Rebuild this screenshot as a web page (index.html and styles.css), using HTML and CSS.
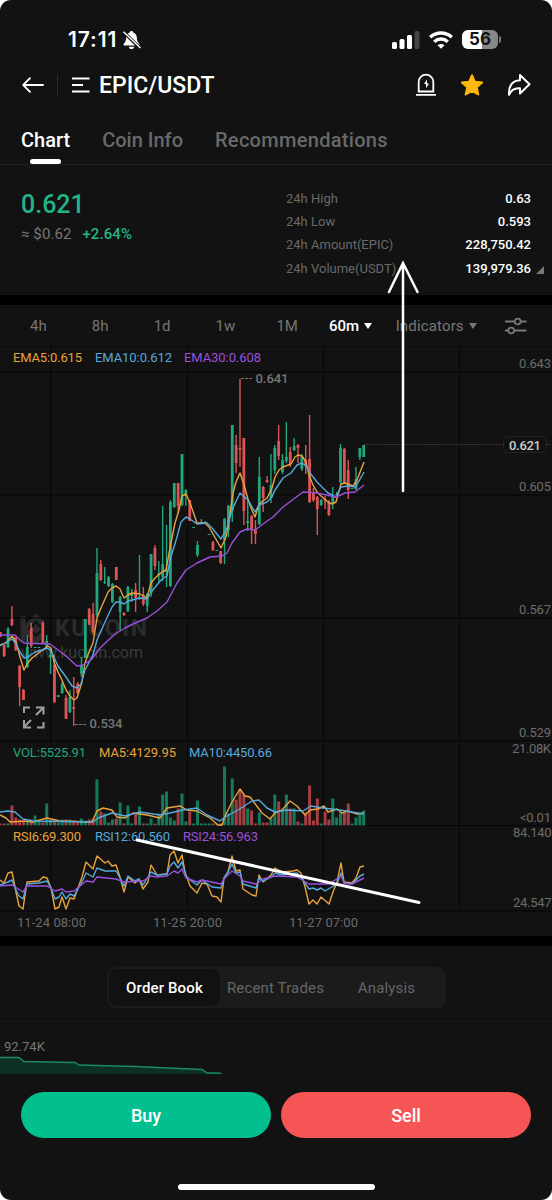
FILE: index.html
```
<!DOCTYPE html>
<html lang="en">
<head>
  <meta charset="UTF-8" />
  <meta name="viewport" content="width=device-width, initial-scale=1.0"/>
  <title>EPIC/USDT</title>
  <link rel="stylesheet" href="styles.css">
</head>
<body>
<div class="phone">

  <!-- Status bar -->
  <div class="status-bar">
    <span class="time">17:11</span>
    <svg class="mute" width="20" height="20" viewBox="0 0 20 20">
      <path d="M9.5 1c-1 0-1.6.7-1.7 1.5C5.400 3.300 4.300 5.200 4.200 7.500 4.100 11 3 12.500 1.700 14c-.5.7-.2 1.500.6 1.500h14.400c.8 0 1.100-.8.6-1.500-1.300-1.500-2.400-3-2.500-6.500-.1-2.300-1.200-4.200-3.600-5C11.100 1.700 10.500 1 9.500 1zM6.800 16.700h5.400c-.2 1.500-1.300 2.300-2.700 2.300s-2.500-.8-2.700-2.300z" fill="#fff"/>
      <path d="M1.500 2l16.500 16" stroke="#121212" stroke-width="3.200"/>
      <path d="M1.500 1.700l17 16.300" stroke="#fff" stroke-width="1.400"/>
    </svg>
    <svg class="signal" width="28" height="18" viewBox="0 0 28 18" fill="#fff">
      <rect x="0" y="11" width="5" height="7" rx="1.500"/>
      <rect x="7.500" y="8" width="5" height="10" rx="1.500"/>
      <rect x="15" y="4" width="5" height="14" rx="1.500"/>
      <rect x="22.500" y="0" width="5" height="18" rx="1.500" fill="#444"/>
    </svg>
    <svg class="wifi" width="24" height="18" viewBox="0 0 24 18" fill="none" stroke="#fff" stroke-width="3.400">
      <path d="M1.200 6.200C7.500.6 16.500.6 22.800 6.200"/>
      <path d="M5.200 10.700c4-3.600 9.600-3.600 13.600 0"/>
      <path d="M12 17.800l-3.500-3.500c2-1.800 5-1.800 7 0z" fill="#fff" stroke="none"/>
    </svg>
    <div class="battery">56</div>
    <div class="battery-cap"></div>
  </div>

  <!-- Pair header -->
  <div class="header">
    <svg width="22" height="16" viewBox="0 0 22 16" fill="none" stroke="#fff" stroke-width="1.800" stroke-linecap="round" stroke-linejoin="round">
      <path d="M21 8H1.200M8 1.200L1.200 8 8 14.800"/>
    </svg>
    <span class="divider"></span>
    <svg class="menu" width="18" height="16" viewBox="0 0 18 16" stroke="#fff" stroke-width="2">
      <path d="M0 1.500h17.500M0 8h11M0 14.500h17.500"/>
    </svg>
    <h1>EPIC/USDT</h1>
    <div class="actions">
      <svg width="22" height="24" viewBox="0 0 22 24" fill="none" stroke="#fff" stroke-width="1.800">
        <path d="M3.700 18.500V9a7.300 7.300 0 0 1 14.600 0v9.500zM1 21.800h20"/>
        <path d="M12 6.500L9 11h2v4.200l3-4.700h-2z" fill="#fff" stroke="none"/>
      </svg>
      <svg width="24" height="24" viewBox="0 0 24 24">
        <path d="M12 2.200l2.900 6.600 7.200.7-5.400 4.800 1.600 7.100L12 17.900l-6.300 3.500 1.600-7.100L1.900 9.500l7.200-.7z" fill="#ffb70f" stroke="#ffb70f" stroke-width="2" stroke-linejoin="round"/>
      </svg>
      <svg width="24" height="24" viewBox="0 0 24 24" fill="none" stroke="#fff" stroke-width="2" stroke-linejoin="round">
        <path d="M13 2l9.500 9.300L13 20.500v-5.200c-5-.6-8.600 1.200-11 6.500C1.500 13 5 7.600 13 7.200z"/>
      </svg>
    </div>
  </div>

  <div class="tabs">
    <span class="tab active">Chart</span>
    <span class="tab">Coin Info</span>
    <span class="tab long">Recommendations</span>
  </div>

  <!-- Price summary -->
  <div class="summary">
    <div class="price-box">
      <div class="price">0.621</div>
      <div class="sub">≈ $0.62 <span class="up">+2.64%</span></div>
    </div>
    <div class="stats">
      <div class="stat"><span>24h High</span><b>0.63</b></div>
      <div class="stat"><span>24h Low</span><b>0.593</b></div>
      <div class="stat"><span>24h Amount(EPIC)</span><b>228,750.42</b></div>
      <div class="stat"><span>24h Volume(USDT)</span><b>139,979.36</b></div>
      <i class="corner"></i>
    </div>
  </div>

  <!-- Timeframes -->
  <div class="frames">
    <span>4h</span>
    <span>8h</span>
    <span>1d</span>
    <span>1w</span>
    <span>1M</span>
    <span class="selected">60m<i class="caret"></i></span>
    <span class="indicators">Indicators<i class="caret"></i></span>
    <svg width="22" height="18" viewBox="0 0 22 18" fill="none" stroke="#777" stroke-width="1.800">
      <path d="M0 4.500h9.500M16 4.500h5.500M0 13.500h3M9.500 13.500h12"/>
      <circle cx="12.700" cy="4.500" r="2.900"/><circle cx="6.200" cy="13.500" r="2.900"/>
    </svg>
  </div>

  <!-- Candles, volume and RSI share one x axis -->
  <svg class="chart" width="552" height="589" viewBox="0 347 552 589">
    <g class="watermark">
      <path d="M23 616v26M24 629l12-12 7 7M24 629l12 12 7-7" class="wm-logo"/>
      <path d="M36 624l5 5-5 5-5-5z" fill="#2b2b2b"/>
      <text x="55" y="636" class="wm-name" textLength="92">KUCOIN</text>
      <text x="21" y="658" class="wm-url" textLength="122">www.kucoin.com</text>
    </g>
    <g id="grid"></g>
    <g id="volume"></g>
    <g id="candles"></g>
    <g id="lines"></g>
    <path d="M364 444.500H503M547 444.500h5" class="last-line"/>
    <rect x="503.500" y="436.500" width="43" height="16" rx="4" class="last-box"/>
    <text x="525" y="449.500" class="last-text" textLength="32">0.621</text>
    <path d="M241 378.500h12M75 724.500h12" class="leader"/>
    <text x="255.500" y="382.500" class="mark" textLength="33">0.641</text>
    <text x="89.500" y="728" class="mark" textLength="33">0.534</text>
    <g id="labels"></g>
    <g class="expand">
      <path d="M24 713v-5.500h6M36 707.500h7.500v7M24 720v7.500h7M37 727.500h6.500V722M36 715l7-7M31 720l-7 7"/>
    </g>
  </svg>

  <!-- Order book -->
  <div class="book">
    <div class="segments">
      <span class="segment on">Order Book</span>
      <span class="segment">Recent Trades</span>
      <span class="segment">Analysis</span>
    </div>
  </div>
  <div class="depth">
    <span>92.74K</span>
    <svg width="223" height="18" viewBox="0 0 223 18">
      <path d="M0 1.500h19l5 4 51 1 4 2.500 56 1.500 67 3 5 3.500h12l3 1H0z" fill="#0d3026"/>
      <path d="M0 1.500h19l5 4 51 1 4 2.500 56 1.500 67 3 5 3.500h12l3 1" fill="none" stroke="#1a8a67" stroke-width="1.300"/>
    </svg>
  </div>

  <div class="buttons">
    <button class="buy">Buy</button>
    <button class="sell">Sell</button>
  </div>
  <div class="home-bar"></div>

  <!-- Hand drawn marks over the screen -->
  <svg class="drawing" width="552" height="1200" viewBox="0 0 552 1200">
    <path d="M403 491V263M389 292l14-29 14.500 29" stroke-width="2.500"/>
    <path d="M137 840L419 902.500" stroke-width="3"/>
  </svg>
</div>

<script>
  const NS = 'http://www.w3.org/2000/svg';
  const GREEN = '#21a67d', RED = '#dd5455';
  const ORANGE = '#e9a33b', BLUE = '#55a9dc', PURPLE = '#9950dd';
  const STEP = 3.866;

  function add(parent, tag, attrs, text) {
    const el = document.createElementNS(NS, tag);
    for (const key in attrs) el.setAttribute(key, attrs[key]);
    if (text) el.textContent = text;
    document.getElementById(parent).appendChild(el);
  }

  // up/down, high, low, body top, body bottom
  const candles = [
    ['d',632,637,632,637], ['d',645,657,645,656], ['u',627,648,629,647], ['d',606,626,619,625], ['d',637,651,637,650],
    ['d',665,706,666,687], ['d',689,700,690,700], ['u',635,668,647,667], ['d',623,648,628,646], ['u',647,648,647,648],
    ['u',647,648,647,648], ['d',621,644,623,643], ['u',635,648,641,647], ['u',648,674,655,657], ['d',655,703,665,702],
    ['u',695,697,695,697], ['u',682,694,684,693], ['d',695,719,698,719], ['u',690,713,697,712], ['d',677,726,707,709],
    ['d',682,694,684,693], ['u',657,677,665,674], ['u',619,658,619,658], ['d',608,625,609,625], ['d',603,634,614,632],
    ['u',548,617,573,615], ['d',560,581,564,580], ['u',567,584,582,583], ['u',576,587,577,586], ['u',583,603,584,602],
    ['d',567,580,567,580], ['u',596,630,597,612], ['d',612,616,613,615], ['u',586,612,587,611], ['u',589,602,594,596],
    ['d',583,612,590,598], ['u',555,600,597,599], ['d',587,606,595,604], ['u',593,612,594,606], ['u',554,597,554,593],
    ['d',545,570,548,566], ['u',561,582,573,575], ['u',506,581,564,577], ['u',525,587,570,572], ['u',500,587,502,586],
    ['u',483,508,483,507], ['d',483,513,483,506], ['u',454,506,454,505], ['u',489,506,490,496], ['d',500,521,500,521],
    ['u',527,528,527,528], ['u',541,557,545,555], ['u',519,523,522,523], ['u',521,523,522,523], ['u',534,535,534,535],
    ['d',541,551,542,550], ['u',550,551,550,551], ['d',551,564,551,563], ['u',518,564,519,540], ['u',505,537,506,530],
    ['u',425,522,425,511], ['d',435,473,445,463], ['d',379,467,448,450], ['d',438,525,438,511], ['u',500,531,521,523],
    ['d',515,544,516,529], ['d',520,544,529,534], ['u',457,525,477,524], ['d',486,512,487,498], ['d',476,483,480,482],
    ['u',454,503,485,498], ['u',445,474,448,470], ['d',425,460,441,456], ['u',454,474,460,472], ['u',422,463,457,461],
    ['d',447,467,452,464], ['u',438,451,446,450], ['d',444,463,445,448], ['u',454,471,457,469], ['d',445,474,460,466],
    ['d',415,503,459,502], ['d',488,502,493,500], ['d',496,535,497,509], ['u',499,506,500,505], ['d',496,509,499,501],
    ['d',500,516,503,515], ['u',487,509,497,503], ['u',492,496,494,495], ['u',444,484,448,482], ['d',448,484,449,483],
    ['d',460,499,470,490], ['u',488,489,488,489], ['u',467,490,479,489], ['u',448,460,448,457], ['u',445,457,445,457]
  ];

  const volumes = [
    2,2,2,20,8,6,4,4,6,10,5,3,22,6,5,3,6,6,6,5,3,7,5,6,7,46,14,12,3,6,7,23,2,20,2,12,19,2,2,7,
    2,12,31,34,8,5,17,32,4,14,2,25,2,2,2,2,2,2,59,12,47,26,36,31,17,15,2,13,3,3,7,31,24,16,31,17,17,4,2,13,
    40,5,27,2,14,6,27,8,13,13,22,2,8,12,15
  ];

  // price averages
  const ema5 = '0,645 6,643 12,636 16,642 20,657 24,670 27,664 32,658 40,652 48,646 51,648 54,662 58,672 62,680 66,690 70,696 74,700 77,698 82,682 85,663 89,652 93,643 97,618 101,608 105,599 108,592 112,588 116,586 120,589 124,598 128,595 132,593 140,594 147,598 151,583 155,578 162,572 166,570 170,548 175,523 179,510 182,496 186,494 190,503 197,523 205,523 209,527 221,548 226,537 228,527 233,493 236,482 240,473 244,485 248,499 251,508 255,517 259,504 267,498 272,488 275,477 279,470 283,467 291,464 295,457 298,455 302,456 306,462 309,475 313,485 317,492 321,496 328,502 332,504 336,502 341,484 345,483 353,486 357,480 364,462';
  const ema10 = '0,646 12,639 16,644 20,652 24,658 28,657 35,652 48,648 52,653 58,666 66,677 72,686 77,688 81,684 85,670 93,655 97,640 105,622 112,607 116,602 120,602 124,604 128,601 140,598 147,599 152,591 162,579 167,576 170,560 177,537 181,522 186,517 190,519 197,524 207,523 212,528 221,539 227,528 232,510 240,493 248,500 255,512 259,505 267,502 272,497 275,490 283,478 291,473 297,465 302,463 306,466 310,473 317,482 328,493 336,497 341,487 348,486 355,487 359,481 364,472';
  const ema30 = '0,635 15,635 20,640 24,643 50,644 58,650 67,657 77,666 83,665 92,659 100,648 115,634 125,628 135,623 147,618 157,611 167,602 177,583 186,570 197,563 210,557 222,556 227,553 232,543 240,532 247,529 255,530 263,524 273,517 283,507 291,501 303,492 317,493 336,497 345,493 355,492 364,485';
  // volume averages
  const ma5 = '0,815 6,818 10,822 25,821 33,822 47,818 60,821 92,822 97,811 103,808 112,810 117,817 125,818 133,813 147,815 160,818 167,808 180,806 187,810 197,811 210,818 218,825 222,825 225,816 232,802 240,789 245,796 250,797 262,813 270,819 275,813 282,810 290,801 297,806 305,815 310,810 318,809 324,806 328,812 337,809 342,813 348,811 357,814 364,813';
  const ma10 = '0,812 8,811 15,812 23,819 33,821 93,822 98,818 112,813 125,816 140,812 160,815 170,813 183,810 197,808 207,815 220,821 225,817 238,810 252,801 259,800 267,808 275,812 287,810 303,811 311,806 323,808 340,810 364,814';
  // RSI
  const rsi6 = '0,880 4,883 8,873 12,872 16,892 19,906 23,909 27,882 39,881 43,877 47,878 51,888 55,909 59,907 62,897 66,909 70,898 74,899 82,877 86,862 93,869 97,856 105,863 108,861 112,866 116,865 120,877 124,892 128,877 135,883 139,879 143,889 148,882 151,865 157,875 167,874 170,855 174,851 178,863 182,855 185,872 190,886 197,893 202,883 207,884 212,896 217,897 221,902 224,878 228,872 232,856 236,871 240,870 243,889 252,895 256,896 259,875 263,882 271,875 275,868 282,872 293,871 297,870 301,873 305,887 309,904 313,900 317,904 321,897 329,904 333,892 337,882 341,863 344,882 352,883 356,878 360,867 364,866';
  const rsi12 = '0,885 8,882 12,880 16,890 19,896 23,899 27,884 39,883 47,881 51,888 55,899 59,897 62,892 66,899 70,894 74,896 82,882 86,873 93,877 97,868 105,871 116,871 120,878 124,886 128,876 135,881 139,879 143,885 151,872 157,875 167,874 170,866 174,862 178,868 182,862 186,876 190,880 197,885 202,880 212,887 221,888 224,878 228,872 232,864 236,873 240,872 243,884 256,888 259,878 263,881 271,877 275,873 282,875 297,873 301,877 309,889 313,888 317,890 321,888 325,891 337,884 341,873 344,883 352,884 360,876 364,874';
  const rsi24 = '0,886 12,885 23,892 27,886 47,886 55,891 62,889 66,892 74,891 86,881 93,882 97,877 116,879 124,882 143,881 151,876 157,877 167,876 174,871 178,873 182,869 186,878 197,882 202,880 221,884 224,879 232,871 240,876 243,881 256,884 263,879 275,876 297,877 309,884 329,884 341,876 344,883 352,884 364,878';

  [372, 495, 618, 741, 825.5, 911].forEach(y => add('grid', 'path', { d: `M0 ${y}H552` }));
  [51, 187.500, 323.500, 459.500].forEach(x => add('grid', 'path', { d: `M${x} 347V911` }));

  candles.forEach(([dir, high, low, top, bottom], i) => {
    const x = 0.3 + i * STEP;
    const fill = dir === 'u' ? GREEN : RED;
    add('candles', 'rect', { x: x - 0.7, y: high, width: 1.4, height: low - high, fill });
    add('candles', 'rect', { x: x - 1.4, y: top, width: 2.8, height: bottom - top, fill });
    add('volume', 'rect', { x: x - 1.5, y: 825.5 - volumes[i], width: 3, height: volumes[i], fill: dir === 'u' ? '#17795b' : '#a43e42' });
  });

  [[ema5, ORANGE], [ema10, BLUE], [ema30, PURPLE], [ma5, ORANGE], [ma10, BLUE], [rsi6, ORANGE], [rsi12, BLUE], [rsi24, PURPLE]]
    .forEach(([points, stroke]) => add('lines', 'polyline', { points, stroke }));

  // x, baseline, text, colour, width
  [
    [13, 362, 'EMA5:0.615', ORANGE, 69], [95, 362, 'EMA10:0.612', BLUE, 77], [184, 362, 'EMA30:0.608', PURPLE, 77],
    [13, 756.5, 'VOL:5525.91', GREEN, 73], [99, 756.5, 'MA5:4129.95', ORANGE, 77], [189, 756.5, 'MA10:4450.66', BLUE, 83],
    [13, 841, 'RSI6:69.300', ORANGE, 68], [95, 841, 'RSI12:60.560', BLUE, 75], [183, 841, 'RSI24:56.963', PURPLE, 75]
  ].forEach(([x, y, text, fill, textLength]) => add('labels', 'text', { x, y, fill, textLength, class: 'legend' }, text));

  [
    [519, 368, '0.643', 32], [519, 491, '0.605', 32], [519, 614, '0.567', 32], [519, 737, '0.529', 32],
    [512, 753, '21.08K', 39], [520, 822, '<0.01', 31], [513, 837, '84.140', 38.5], [513, 906.5, '24.547', 38.5],
    [17, 927, '11-24 08:00', 69], [153, 927, '11-25 20:00', 69], [289, 927, '11-27 07:00', 69]
  ].forEach(([x, y, text, textLength]) => add('labels', 'text', { x, y, textLength, class: 'axis' }, text));
</script>
</body>
</html>
```
FILE: styles.css
```
* {
  box-sizing: border-box;
}

body {
  margin: 0;
  background: #fff;
  font-family: Roboto, "Liberation Sans", sans-serif;
  color: #fff;
}

svg {
  display: block;
  flex-shrink: 0;
}

.phone {
  position: relative;
  width: 552px;
  height: 1200px;
  background: #121212;
  border-radius: 11px;
  overflow: hidden;
}

/* Status bar */
.status-bar {
  display: flex;
  align-items: center;
  height: 60px;
  padding: 19px 51px 0 68px;
}

.time {
  font-family: Inter, sans-serif;
  font-size: 21px;
  font-weight: 600;
  width: 54px;
  letter-spacing: 0.9px;
  font-feature-settings: "tnum" 0;
}

.signal {
  margin-left: auto;
}

.wifi {
  margin: 0 9px 0 9px;
}

.battery {
  width: 36px;
  height: 19px;
  border-radius: 6px;
  background: linear-gradient(90deg, #fff 56%, #888 56%);
  color: #121212;
  font-family: Inter, sans-serif;
  font-size: 17px;
  font-weight: 700;
  line-height: 19px;
  text-align: center;
}

.battery-cap {
  width: 2px;
  height: 7px;
  margin-left: 1px;
  border-radius: 0 2px 2px 0;
  background: #777;
}

/* Header */
.header {
  display: flex;
  align-items: center;
  height: 50px;
  padding: 0 21px 0 22px;
}

.divider {
  width: 1px;
  height: 22px;
  margin: 0 14px 0 13px;
  background: #2b2b2b;
}

h1 {
  margin: 0 0 0 9px;
  font-size: 23px;
  font-weight: 500;
}

.actions {
  display: flex;
  align-items: center;
  gap: 23px;
  margin-left: auto;
}

.tabs {
  display: flex;
  gap: 32px;
  height: 55px;
  padding: 0 21px;
  border-bottom: 1px solid #202020;
  font-size: 20px;
  font-weight: 500;
  line-height: 60px;
  color: #696969;
}

.tab.long {
  letter-spacing: 0.3px;
}

.tab.active {
  position: relative;
  color: #fff;
}

.tab.active::after {
  content: "";
  position: absolute;
  left: 9px;
  bottom: 0;
  width: 31px;
  height: 5px;
  border-radius: 3px;
  background: #fff;
}

/* Summary */
.summary {
  display: flex;
  justify-content: space-between;
  height: 130px;
  padding: 22px 21px 0;
}

.price {
  font-size: 25px;
  font-weight: 500;
  line-height: 36px;
  color: #21b487;
}

.sub {
  margin-top: 2px;
  font-size: 15px;
  letter-spacing: 0.1px;
  color: #777;
}

.up {
  margin-left: 7px;
  font-weight: 500;
  color: #21b487;
}

.stats {
  position: relative;
  width: 245px;
}

.stat {
  display: flex;
  justify-content: space-between;
  font-size: 13px;
  line-height: 23.2px;
  color: #696969;
}

.stat b {
  font-weight: 500;
  color: #fff;
}

.corner {
  position: absolute;
  right: -13px;
  top: 79px;
  border-left: 8px solid transparent;
  border-bottom: 8px solid #777;
}

/* Timeframes */
.frames {
  display: flex;
  align-items: center;
  height: 52px;
  padding: 0 25px 0 30px;
  border-top: 10px solid #000;
  border-bottom: 1px solid #0a0a0a;
  font-size: 15px;
  color: #777;
}

.frames span {
  width: 62.2px;
}

.frames .selected {
  display: flex;
  align-items: center;
  width: 67px;
  margin-left: -12px;
  font-weight: 500;
  color: #fff;
}

.frames .indicators {
  display: flex;
  align-items: center;
  width: 110px;
  letter-spacing: 0.15px;
}

.frames span:nth-child(5) {
  width: 64px;
  margin-left: -1px;
  margin-right: 1px;
}

.caret {
  margin-left: 5px;
  border: 4.5px solid transparent;
  border-top: 6px solid currentColor;
  border-bottom: 0;
}

/* Chart */
#grid path {
  stroke: #050505;
  stroke-width: 1;
}

#lines polyline {
  fill: none;
  stroke-width: 1.4;
  stroke-linejoin: round;
}

.legend,
.axis {
  font-size: 13px;
}

.axis {
  fill: #6c6c6c;
}

.mark {
  font-size: 13px;
  font-weight: 500;
  fill: #777;
}

.leader {
  stroke: #777;
  stroke-dasharray: 3 1;
}

.wm-logo {
  fill: none;
  stroke: #2b2b2b;
  stroke-width: 5;
}

.wm-name {
  font-size: 23px;
  font-weight: 700;
  fill: #2b2b2b;
}

.wm-url {
  font-size: 16px;
  fill: #3b3b3b;
}

.last-line {
  stroke: #555;
  stroke-dasharray: 1 1.5;
}

.last-box {
  fill: #121212;
  stroke: #222;
}

.last-text {
  font-size: 13px;
  font-weight: 500;
  fill: #ccc;
  text-anchor: middle;
}

.expand path {
  fill: none;
  stroke: #a0a0a0;
  stroke-width: 2;
}

/* Order book */
.book {
  height: 86px;
  padding-top: 21px;
  border-top: 10px solid #000;
  border-bottom: 1px solid #1a1a1a;
}

.segments {
  display: flex;
  width: 339px;
  height: 41px;
  margin-left: 107px;
  padding: 2px;
  border-radius: 9px;
  background: #1b1b1b;
  font-size: 15px;
  line-height: 38px;
  letter-spacing: 0.15px;
  color: #666;
}

.segment {
  width: 111px;
  text-align: center;
}

.segment.on {
  border-radius: 8px;
  background: #111;
  font-weight: 500;
  color: #fff;
}

.depth {
  height: 70px;
  padding-top: 17px;
  font-size: 13px;
  line-height: 16px;
  color: #777;
}

.depth span {
  display: block;
  margin: 0 0 1px 4px;
}

.buttons {
  display: flex;
  gap: 10px;
  padding: 0 21px;
}

.buttons button {
  flex: 1;
  height: 46px;
  padding: 0;
  border: none;
  border-radius: 23px;
  font-family: inherit;
  font-size: 18px;
  font-weight: 500;
  color: #fff;
}

.buttons .buy {
  background: #02bf90;
}

.buttons .sell {
  background: #f65555;
}

.home-bar {
  width: 197px;
  height: 6px;
  margin: 46px 0 0 178px;
  border-radius: 3px;
  background: #fff;
}

.drawing {
  position: absolute;
  top: 0;
  left: 0;
  fill: none;
  stroke: #fff;
  stroke-linecap: round;
}
```
